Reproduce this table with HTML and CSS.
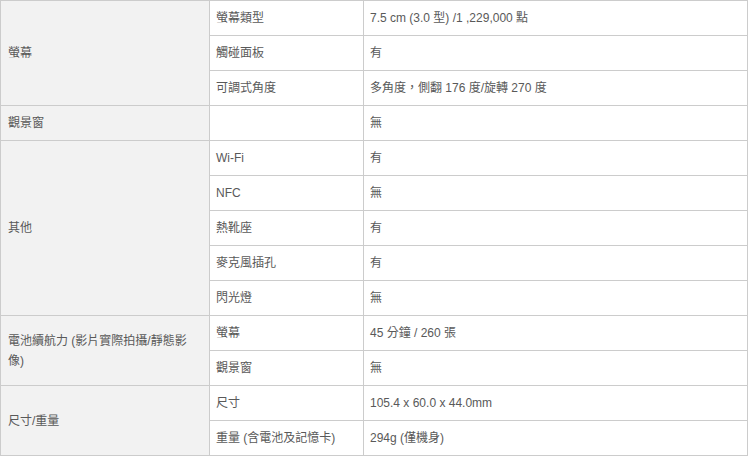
FILE: index.html
```html
<!DOCTYPE html>
<html lang="zh-Hant">
<head>
<meta charset="utf-8">
<link rel="stylesheet" href="styles.css">
</head>
<body>
<table class="spec">
  <colgroup>
    <col class="c1">
    <col class="c2">
    <col class="c3">
  </colgroup>
  <tbody>
    <tr><td class="head" rowspan="3">螢幕</td><td>螢幕類型</td><td>7.5 cm (3.0 型) /1 ,229,000 點</td></tr>
    <tr><td>觸碰面板</td><td>有</td></tr>
    <tr><td>可調式角度</td><td>多角度，側翻 176 度/旋轉 270 度</td></tr>
    <tr><td class="head">觀景窗</td><td></td><td>無</td></tr>
    <tr><td class="head" rowspan="5">其他</td><td>Wi-Fi</td><td>有</td></tr>
    <tr><td>NFC</td><td>無</td></tr>
    <tr><td>熱靴座</td><td>有</td></tr>
    <tr><td>麥克風插孔</td><td>有</td></tr>
    <tr><td>閃光燈</td><td>無</td></tr>
    <tr><td class="head" rowspan="2">電池續航力 (影片實際拍攝/靜態影像)</td><td>螢幕</td><td>45 分鐘 / 260 張</td></tr>
    <tr><td>觀景窗</td><td>無</td></tr>
    <tr><td class="head" rowspan="2">尺寸/重量</td><td>尺寸</td><td>105.4 x 60.0 x 44.0mm</td></tr>
    <tr><td>重量 (含電池及記憶卡)</td><td>294g (僅機身)</td></tr>
  </tbody>
</table>
</body>
</html>
```
FILE: styles.css
```css
html, body {
  margin: 0;
  padding: 0;
  background: #ffffff;
}
.spec {
  border-collapse: collapse;
  table-layout: fixed;
  width: 747px;
  font-family: "Liberation Sans", Arial, "Noto Sans CJK TC", sans-serif;
  font-size: 12px;
  line-height: 20px;
  color: #595959;
}
.c1 { width: 209px; }
.c2 { width: 154px; }
.c3 { width: 384px; }
.spec td {
  border: 1px solid #cccccc;
  height: 35px;
  padding: 0 6px;
  box-sizing: border-box;
  vertical-align: middle;
  text-align: left;
}
.spec td.head {
  background: #f2f2f2;
  padding-left: 7px;
  padding-right: 16px;
}
```
